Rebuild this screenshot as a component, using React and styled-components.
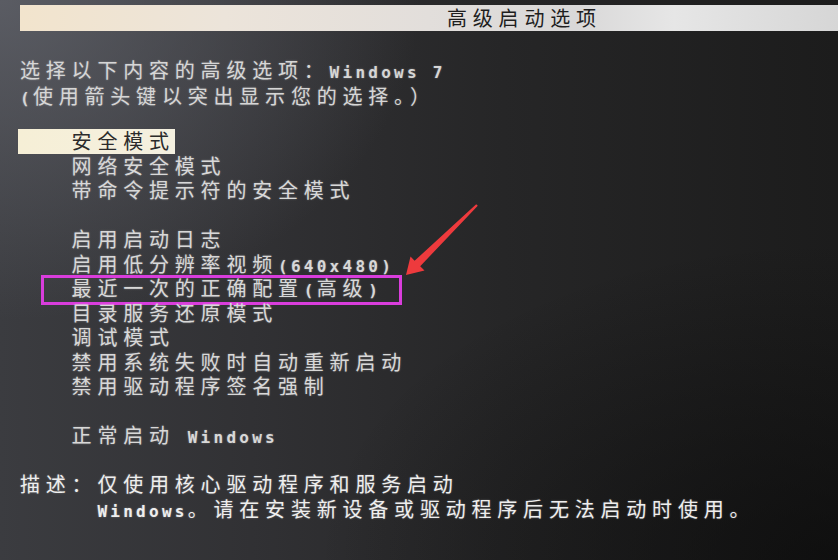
import React from "react";
import styled, { createGlobalStyle } from "styled-components";

const HALF = 12.9;
const LINE = 24.5;

const GlobalStyle = createGlobalStyle`
  html, body { margin: 0; padding: 0; background: #1c1c1c; }
  #root { width: 838px; height: 560px; }
`;

const Screen = styled.div`
  position: relative;
  width: 838px;
  height: 560px;
  overflow: hidden;
  background:
    radial-gradient(ellipse 420px 320px at 0% 0%, rgba(98, 100, 108, 0.8) 0%, rgba(98, 100, 108, 0) 100%),
    radial-gradient(ellipse 520px 320px at 100% 100%, rgba(8, 8, 8, 0.65) 0%, rgba(8, 8, 8, 0) 100%),
    linear-gradient(90deg, #3b3c40 0%, #313134 30%, #262627 60%, #1c1c1c 100%);
  color: #d4d4d4;
`;

const TitleBar = styled.div`
  margin: 5px 0 0 20px;
  height: 26px;
  line-height: 26px;
  padding-left: 427px;
  background: linear-gradient(
    90deg,
    #f2e4cd 0%,
    #ece4da 25%,
    #e2dedb 50%,
    #d9d8d8 68%,
    #e6e6e6 80%,
    #d6d6d6 100%
  );
  color: #1e1e1e;
  white-space: pre;
`;

const Body = styled.div`
  padding: 26px 0 0 20px;
`;

const HeaderRow = styled.div`
  height: 26px;
  line-height: 26px;
  white-space: pre;
  color: #d6d6d6;
  text-shadow: 0 0 2px rgba(255, 255, 255, 0.35);
`;

const Gap = styled.div`
  height: ${(p) => p.$h}px;
`;

const Row = styled.div`
  position: relative;
  width: fit-content;
  height: ${LINE}px;
  line-height: ${LINE}px;
  white-space: pre;
  padding-left: ${(p) => (p.$indent || 0) * HALF}px;
  color: ${(p) => (p.$bright ? "#eeeeee" : "#d8d8d8")};
  text-shadow: 0 0 2px rgba(255, 255, 255, 0.35);
  ${(p) =>
    p.$selected &&
    `
    margin-left: -2px;
    padding-left: ${(p.$indent || 0) * HALF + 2}px;
    background: linear-gradient(90deg, #f6efd6 0%, #f4f0e0 100%);
    color: #2b2b2b;
    text-shadow: none;
  `}
  ${(p) =>
    p.$marked &&
    `
    &::after {
      content: "";
      position: absolute;
      left: 21px;
      top: -1px;
      width: 361px;
      height: 30px;
      box-sizing: border-box;
      border: 3px solid #d93ddc;
      pointer-events: none;
    }
  `}
`;

const Cjk = styled.span`
  font-family: "Noto Sans CJK SC", "Noto Sans CJK TC", sans-serif;
  font-size: 20px;
  letter-spacing: ${2 * HALF - 20}px;
`;

const Lat = styled.span`
  font-family: "DejaVu Sans Mono", "Liberation Mono", monospace;
  font-weight: bold;
  font-size: 16px;
  letter-spacing: ${HALF - 16 * 0.602}px;
`;

const Arrow = styled.svg`
  position: absolute;
  left: 400px;
  top: 195px;
  width: 85px;
  height: 85px;
  overflow: visible;
`;

function Mixed({ text }) {
  const parts = text.match(/[\x20-\x7e]+|[^\x20-\x7e]+/g) || [];
  return parts.map((s, i) =>
    /[\x20-\x7e]/.test(s[0]) ? <Lat key={i}>{s}</Lat> : <Cjk key={i}>{s}</Cjk>
  );
}

const groups = [
  [
    { t: "安全模式", selected: true },
    { t: "网络安全模式" },
    { t: "带命令提示符的安全模式" },
  ],
  [
    { t: "启用启动日志" },
    { t: "启用低分辨率视频(640x480)" },
    { t: "最近一次的正确配置(高级)", marked: true },
    { t: "目录服务还原模式" },
    { t: "调试模式" },
    { t: "禁用系统失败时自动重新启动" },
    { t: "禁用驱动程序签名强制" },
  ],
  [{ t: "正常启动 Windows" }],
];

export default function App() {
  return (
    <>
      <GlobalStyle />
      <Screen>
        <TitleBar>
          <Cjk>高级启动选项</Cjk>
        </TitleBar>
        <Body>
          <HeaderRow>
            <Mixed text="选择以下内容的高级选项：Windows 7" />
          </HeaderRow>
          <HeaderRow>
            <Mixed text="(使用箭头键以突出显示您的选择。）" />
          </HeaderRow>
          <Gap $h={20} />
          {groups.map((g, gi) => (
            <React.Fragment key={gi}>
              {gi > 0 && <Gap $h={LINE} />}
              {g.map((r, ri) => (
                <Row key={ri} $indent={4} $selected={r.selected} $marked={r.marked}>
                  <Mixed text={r.t} />
                </Row>
              ))}
            </React.Fragment>
          ))}
          <Gap $h={LINE} />
          <Row $bright>
            <Mixed text="描述：仅使用核心驱动程序和服务启动" />
          </Row>
          <Row $bright $indent={6}>
            <Mixed text="Windows。请在安装新设备或驱动程序后无法启动时使用。" />
          </Row>
        </Body>
        <Arrow viewBox="0 0 85 85">
          <polygon
            points="6,80 24.5,75.5 20.2,71.2 77.8,10.8 76.2,9.2 14.6,65.8 10.5,61.5"
            fill="#ee3a3d"
          />
        </Arrow>
      </Screen>
    </>
  );
}
